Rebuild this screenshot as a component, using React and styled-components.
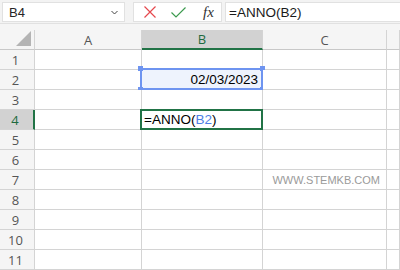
import styled, { createGlobalStyle } from "styled-components";

const GlobalStyle = createGlobalStyle`
  html, body {
    margin: 0;
    padding: 0;
    background: #fff;
    overflow: hidden;
  }
  body {
    font-family: "Liberation Sans", Arial, sans-serif;
  }
`;

const Page = styled.div`
  width: 400px;
  height: 270px;
  overflow: hidden;
  background: #fff;
  display: flex;
  flex-direction: column;
`;

const Toolbar = styled.div`
  height: 26px;
  box-sizing: border-box;
  display: flex;
  align-items: stretch;
  padding: 2px 0 1px 2px;
  background: #f3f3f3;
  border-bottom: 1px solid #e1e1e1;
`;

const NameBox = styled.div`
  width: 123px;
  box-sizing: border-box;
  display: flex;
  align-items: center;
  justify-content: space-between;
  padding: 0 6px 0 6px;
  background: #fff;
  border: 1px solid #e1e1e1;
  font-size: 13px;
  color: #262626;
`;

const Grip = styled.div`
  width: 8px;
`;

const FxButtons = styled.div`
  width: 89px;
  box-sizing: border-box;
  display: flex;
  align-items: center;
  gap: 15px;
  padding-left: 10px;
  background: #fff;
  border: 1px solid #e1e1e1;
`;

const FxLabel = styled.span`
  font-family: "Liberation Serif", "Times New Roman", serif;
  font-style: italic;
  font-size: 15px;
  color: #333;
  margin-left: 2px;
`;

const FormulaInput = styled.div`
  flex: 1;
  margin-left: 3px;
  display: flex;
  align-items: center;
  padding-left: 3px;
  background: #fff;
  border: 1px solid #e1e1e1;
  border-right: none;
  font-size: 13.5px;
  color: #1a1a1a;
`;

const Spacer = styled.div`
  height: 6px;
  background: #f5f5f5;
`;

const Sheet = styled.div`
  display: grid;
  grid-template-columns: 35px 107px 121px 124px 1fr;
  grid-auto-rows: 20px;
  flex: 1;
`;

const Corner = styled.div`
  box-sizing: border-box;
  background: #f5f5f5;
  border-right: 1px solid #d4d4d4;
  border-bottom: 1px solid #c8c8c8;
  display: flex;
  align-items: flex-end;
  justify-content: flex-end;
  padding: 0 3px 3px 0;
`;

const ColHead = styled.div`
  box-sizing: border-box;
  background: ${(p) => (p.$active ? "#d2d2d2" : "#f5f5f5")};
  color: ${(p) => (p.$active ? "#1e6b3f" : "#555")};
  border-right: 1px solid #d4d4d4;
  border-bottom: ${(p) => (p.$active ? "2px solid #217346" : "1px solid #c8c8c8")};
  display: flex;
  align-items: center;
  justify-content: center;
  font-family: "Open Sans", "Liberation Sans", sans-serif;
  font-size: 13px;
`;

const RowHead = styled.div`
  box-sizing: border-box;
  background: ${(p) => (p.$active ? "#d2d2d2" : "#f5f5f5")};
  color: ${(p) => (p.$active ? "#1e6b3f" : "#555")};
  border-right: ${(p) => (p.$active ? "2px solid #217346" : "1px solid #d4d4d4")};
  border-bottom: 1px solid #d4d4d4;
  display: flex;
  align-items: center;
  justify-content: center;
  padding-right: 3px;
  font-family: "Open Sans", "Liberation Sans", sans-serif;
  font-size: 13px;
`;

const Cell = styled.div`
  position: relative;
  box-sizing: border-box;
  background: ${(p) => (p.$range ? "#eef3fd" : "#fff")};
  border-right: 1px solid #d4d4d4;
  border-bottom: 1px solid #d4d4d4;
  display: flex;
  align-items: center;
  justify-content: ${(p) => (p.$right ? "flex-end" : "flex-start")};
  padding: 0 4px 0 2px;
  font-size: 13.5px;
  color: #000;
  white-space: nowrap;
`;

const Watermark = styled.span`
  font-size: 11px;
  color: #9a9a9a;
  margin-right: 2px;
`;

const Ref = styled.span`
  color: #4f7fe6;
`;

const RangeFrame = styled.div`
  position: absolute;
  left: -2px;
  top: -2px;
  right: -1px;
  bottom: -1px;
  border: 2px solid #6e94f0;
  pointer-events: none;
`;

const Handle = styled.div`
  position: absolute;
  width: 5px;
  height: 5px;
  background: #6e94f0;
  ${(p) => (p.$top ? "top: -4px;" : "bottom: -4px;")}
  ${(p) => (p.$left ? "left: -4px;" : "right: -4px;")}
`;

const ActiveFrame = styled.div`
  position: absolute;
  left: -2px;
  top: -1px;
  right: -1px;
  bottom: -1px;
  border: 2px solid #217346;
  pointer-events: none;
`;

const cols = ["A", "B", "C", ""];
const rows = [1, 2, 3, 4, 5, 6, 7, 8, 9, 10, 11];

function cellContent(r, c) {
  if (r === 2 && c === 1) {
    return (
      <Cell key={c} $range $right>
        02/03/2023
        <RangeFrame>
          <Handle $top $left />
          <Handle $top />
          <Handle $left />
          <Handle />
        </RangeFrame>
      </Cell>
    );
  }
  if (r === 4 && c === 1) {
    return (
      <Cell key={c}>
        =ANNO(<Ref>B2</Ref>)
        <ActiveFrame />
      </Cell>
    );
  }
  if (r === 7 && c === 2) {
    return (
      <Cell key={c} $right>
        <Watermark>WWW.STEMKB.COM</Watermark>
      </Cell>
    );
  }
  return <Cell key={c} />;
}

export default function App() {
  return (
    <Page>
      <GlobalStyle />
      <Toolbar>
        <NameBox>
          B4
          <svg width="7" height="5" viewBox="0 0 7 5">
            <path d="M0.5 1 L3.5 4 L6.5 1" fill="none" stroke="#444" strokeWidth="1" />
          </svg>
        </NameBox>
        <Grip />
        <FxButtons>
          <svg width="12" height="12" viewBox="0 0 12 12">
            <path d="M0.5 0.5 L11.5 11.5 M11.5 0.5 L0.5 11.5" stroke="#e5484d" strokeWidth="1.2" fill="none" />
          </svg>
          <svg width="15" height="11" viewBox="0 0 15 11">
            <path d="M0.5 5.5 L5 10 L14.5 0.5" stroke="#3c9a4e" strokeWidth="1.2" fill="none" />
          </svg>
          <FxLabel>fx</FxLabel>
        </FxButtons>
        <FormulaInput>=ANNO(B2)</FormulaInput>
      </Toolbar>
      <Spacer />
      <Sheet>
        <Corner>
          <svg width="15" height="15" viewBox="0 0 15 15">
            <path d="M15 0 L15 15 L0 15 Z" fill="#b4b4b4" />
          </svg>
        </Corner>
        {cols.map((c, i) => (
          <ColHead key={i} $active={c === "B"}>
            {c}
          </ColHead>
        ))}
        {rows.map((r) => [
          <RowHead key={"h" + r} $active={r === 4}>
            {r}
          </RowHead>,
          ...cols.map((_, c) => cellContent(r, c)),
        ])}
      </Sheet>
    </Page>
  );
}
